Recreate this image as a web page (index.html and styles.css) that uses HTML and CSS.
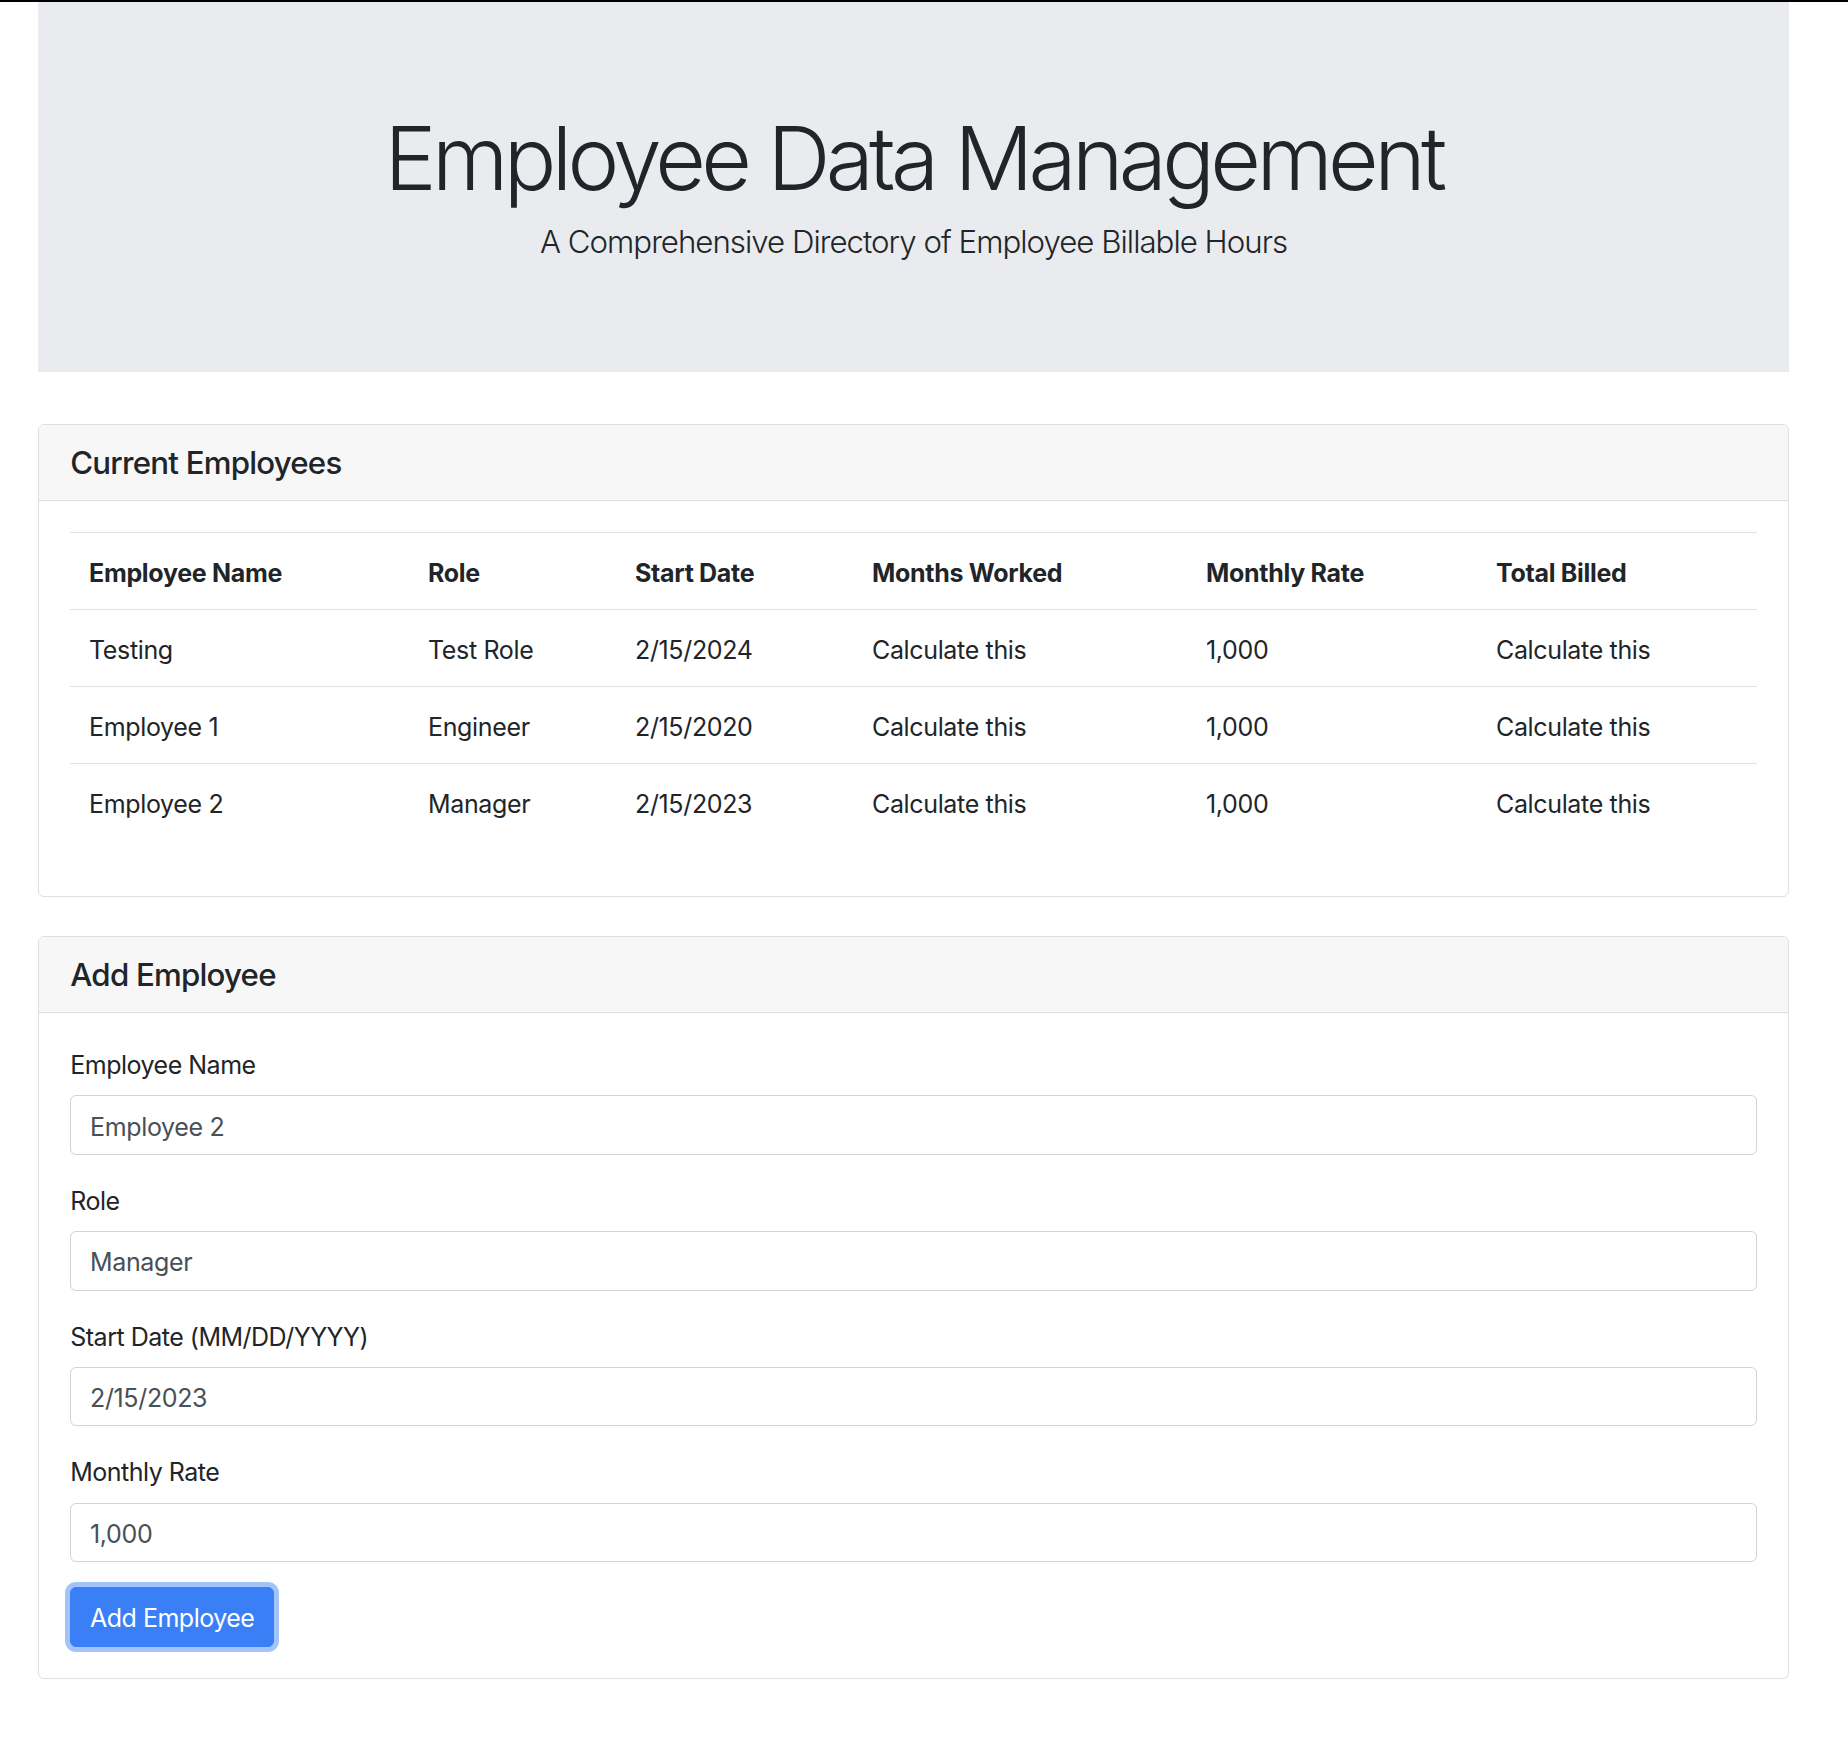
FILE: index.html
```html
<!DOCTYPE html>
<html lang="en">
<head>
<meta charset="utf-8">
<title>Employee Data Management</title>
<link rel="stylesheet" href="styles.css">
</head>
<body>
<div class="topbar"></div>
<div class="page">
  <header class="jumbotron">
    <h1 class="display">Employee Data Management</h1>
    <p class="lead">A Comprehensive Directory of Employee Billable Hours</p>
  </header>

  <section class="card card-employees">
    <div class="card-header"><h5 class="card-title">Current Employees</h5></div>
    <div class="card-body">
      <table class="table">
        <colgroup>
          <col class="c1"><col class="c2"><col class="c3"><col class="c4"><col class="c5"><col class="c6">
        </colgroup>
        <thead>
          <tr>
            <th>Employee Name</th>
            <th>Role</th>
            <th>Start Date</th>
            <th>Months Worked</th>
            <th>Monthly Rate</th>
            <th>Total Billed</th>
          </tr>
        </thead>
        <tbody>
          <tr><td>Testing</td><td>Test Role</td><td>2/15/2024</td><td>Calculate this</td><td>1,000</td><td>Calculate this</td></tr>
          <tr><td>Employee 1</td><td>Engineer</td><td>2/15/2020</td><td>Calculate this</td><td>1,000</td><td>Calculate this</td></tr>
          <tr><td>Employee 2</td><td>Manager</td><td>2/15/2023</td><td>Calculate this</td><td>1,000</td><td>Calculate this</td></tr>
        </tbody>
      </table>
    </div>
  </section>

  <section class="card card-add">
    <div class="card-header"><h5 class="card-title">Add Employee</h5></div>
    <div class="card-body">
      <form class="form">
        <div class="form-group">
          <label class="label" for="name">Employee Name</label>
          <input class="form-control" id="name" type="text" value="Employee 2">
        </div>
        <div class="form-group">
          <label class="label" for="role">Role</label>
          <input class="form-control" id="role" type="text" value="Manager">
        </div>
        <div class="form-group">
          <label class="label" for="start">Start Date (MM/DD/YYYY)</label>
          <input class="form-control" id="start" type="text" value="2/15/2023">
        </div>
        <div class="form-group">
          <label class="label" for="rate">Monthly Rate</label>
          <input class="form-control" id="rate" type="text" value="1,000">
        </div>
        <button class="btn-primary" type="button">Add Employee</button>
      </form>
    </div>
  </section>
</div>
</body>
</html>
```

FILE: styles.css
```css
* { box-sizing: border-box; }

html, body {
  margin: 0;
  padding: 0;
  background: #ffffff;
}

body {
  font-family: "Inter", "Roboto", "Liberation Sans", sans-serif;
  font-size: 25px;
  line-height: 37.5px;
  color: #212529;
  letter-spacing: -0.35px;
}

.topbar {
  height: 2px;
  background: #000000;
}

.page {
  padding: 0 59px 64px 38px;
}

.jumbotron {
  background: #e9ebef;
  height: 370px;
  padding: 104px 50px 0;
  text-align: center;
}

.display {
  margin: 0 0 8px;
  font-size: 87.5px;
  line-height: 105px;
  font-weight: 300;
  letter-spacing: -4.65px;
}

.lead {
  margin: 0;
  font-size: 31.25px;
  line-height: 46.875px;
  font-weight: 300;
  letter-spacing: -1px;
}

.card {
  border: 1px solid #dfdfdf;
  border-radius: 6px;
  background: #ffffff;
  overflow: hidden;
}

.card-employees { margin-top: 52px; }
.card-add { margin-top: 39px; }

.card-header {
  background: #f7f7f7;
  border-bottom: 1px solid #dfdfdf;
  padding: 20px 31.25px 17.5px;
}

.card-title {
  margin: 0;
  font-size: 31.25px;
  line-height: 37.5px;
  font-weight: 500;
  letter-spacing: -0.8px;
}

.card-body {
  padding: 31.25px;
}

.table {
  width: 100%;
  border-collapse: collapse;
  table-layout: fixed;
  margin-bottom: 24px;
  font-size: 25px;
  line-height: 38px;
}

.c1 { width: 339px; }
.c2 { width: 207px; }
.c3 { width: 237px; }
.c4 { width: 334px; }
.c5 { width: 290px; }
.c6 { width: auto; }

.table th,
.table td {
  padding: 21px 18.75px 17px;
  border-top: 1px solid #dee2e6;
  text-align: left;
  vertical-align: top;
  white-space: nowrap;
}

.table th {
  font-weight: 700;
  letter-spacing: -0.3px;
}

.form-group {
  margin-bottom: 25px;
}

.label {
  display: block;
  padding-top: 3px;
  margin-bottom: 11px;
  font-size: 25px;
  line-height: 37.5px;
  letter-spacing: -0.5px;
}

.form-control {
  display: block;
  width: 100%;
  height: 59.4px;
  padding: 11px 18.75px 7.8px;
  font-family: inherit;
  font-size: 25px;
  line-height: 37.5px;
  letter-spacing: -0.35px;
  color: #495057;
  background: #ffffff;
  border: 1px solid #ced4da;
  border-radius: 6px;
  outline: none;
}

.btn-primary {
  display: inline-block;
  height: 59.4px;
  padding: 11px 18.75px 7.8px;
  font-family: inherit;
  font-size: 25px;
  line-height: 37.5px;
  letter-spacing: -0.5px;
  color: #ffffff;
  background: #3b7ff6;
  border: 1px solid #3b7ff6;
  border-radius: 6px;
  box-shadow: 0 0 0 5px #a3c4fa;
}
```
